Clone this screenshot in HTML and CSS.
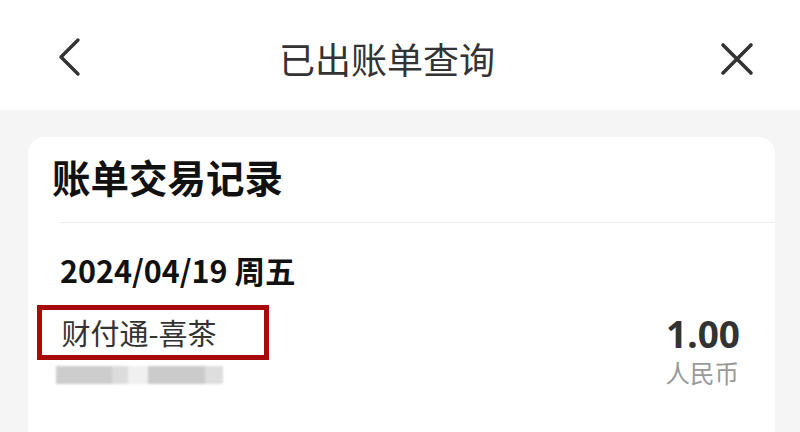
FILE: index.html
```html
<!DOCTYPE html>
<html lang="zh">
<head>
<meta charset="utf-8">
<link rel="stylesheet" href="styles.css">
</head>
<body>
<div class="page">
  <header class="nav">
    <svg class="icon back" viewBox="0 0 30 40" width="30" height="40"><path d="M24 3 L7 20 L24 37" fill="none" stroke="#333" stroke-width="3.4" stroke-linecap="round" stroke-linejoin="round"/></svg>
    <div class="title">已出账单查询</div>
    <svg class="icon close" viewBox="0 0 34 34" width="34" height="34"><path d="M3 3 L31 31 M31 3 L3 31" fill="none" stroke="#333" stroke-width="3.6" stroke-linecap="round"/></svg>
  </header>
  <main class="content">
    <section class="card">
      <h1 class="card-title">账单交易记录</h1>
      <div class="divider"></div>
      <div class="date">2024/04/19 周五</div>
      <div class="row">
        <div class="left">
          <div class="merchant">财付通-喜茶</div>
          <div class="blur">
            <span class="b b1"></span><span class="b b2"></span><span class="b b3"></span><span class="b b4"></span><span class="b b5"></span>
          </div>
        </div>
        <div class="right">
          <div class="amount">1.00</div>
          <div class="currency">人民币</div>
        </div>
      </div>
    </section>
  </main>
</div>
</body>
</html>
```
FILE: styles.css
```css
* { box-sizing: border-box; margin: 0; padding: 0; }
html, body { width: 800px; height: 432px; overflow: hidden; }
body {
  background: #f5f5f5;
  font-family: "Noto Sans CJK SC", "Noto Sans", sans-serif;
  color: #333;
}
.page { display: flex; flex-direction: column; height: 432px; overflow: hidden; }
.nav {
  flex-shrink: 0;
  height: 110px;
  background: #fff;
  display: flex;
  align-items: center;
  justify-content: space-between;
  padding: 0 46px 0 54px;
  position: relative;
}
.title {
  font-size: 36px;
  line-height: 40px;
  color: #333;
  position: absolute;
  left: 0; right: 0;
  text-align: center;
  padding-right: 26px;
  top: 38px;
}
.icon { display: block; }
.back { margin-top: 4px; }
.close { margin-top: 7px; }
.content { padding: 27px 25px 0 28px; flex: 1; min-height: 0; }
.card {
  background: #fff;
  border-radius: 16px 16px 0 0;
  height: 320px;
  padding: 0 0 0 24px;
}
.card-title {
  font-size: 38.5px;
  font-weight: 700;
  line-height: 48px;
  padding-top: 15px;
  color: #111;
}
.divider { height: 1px; background: #ececec; margin: 22px 0 0 8px; }
.date {
  font-size: 30.5px;
  font-weight: 700;
  color: #111;
  line-height: 38px;
  margin: 28px 0 0 8px;
}
.row { display: flex; justify-content: space-between; margin-top: 16px; padding-right: 35px; }
.left { display: flex; flex-direction: column; }
.merchant {
  font-size: 29px;
  line-height: 40px;
  color: #333;
  border: 5.5px solid #a80a0a;
  padding: 2px 20px 3px 19.5px;
  margin-left: -15px;
  width: 232px;
  height: 55px;
  white-space: nowrap;
}
.blur { display: flex; margin: 6px 0 0 4px; height: 20px; filter: blur(1.2px); }
.b { display: block; height: 18px; }
.b1 { width: 56px; background: #cdcdcd; }
.b2 { width: 16px; background: #dcdcdc; }
.b3 { width: 20px; background: #f0f0f0; }
.b4 { width: 57px; background: #cbcbcb; }
.b5 { width: 18px; background: #dedede; }
.right { display: flex; flex-direction: column; align-items: flex-end; }
.amount {
  font-size: 37px;
  font-weight: 700;
  color: #333;
  line-height: 36px;
  margin-top: 11px;
  font-family: "Noto Sans", "Noto Sans CJK SC", sans-serif;
}
.currency { font-size: 24.5px; color: #999; line-height: 30px; margin-top: 6px; margin-right: 1px; }
```
